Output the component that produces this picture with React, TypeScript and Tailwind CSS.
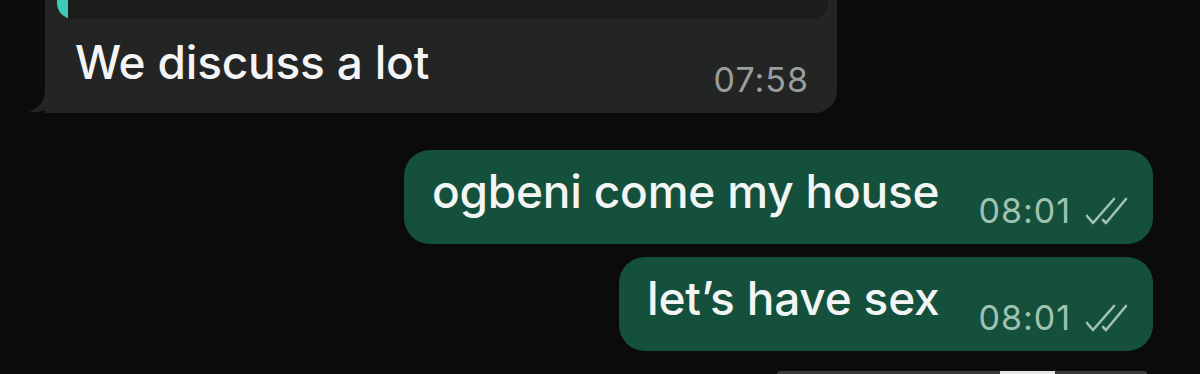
// Chat thread snippet
const font = { fontFamily: 'Inter, "Liberation Sans", Arial, sans-serif' };

function DoubleCheck() {
  return (
    <svg width="44" height="30" viewBox="0 0 44 30" fill="none" className="shrink-0">
      <path d="M3 20 L9 27 L30 3" stroke="#9fc2b2" strokeWidth="2.6" strokeLinecap="round" strokeLinejoin="round" />
      <path d="M19 24 L22 27 L42 3" stroke="#9fc2b2" strokeWidth="2.6" strokeLinecap="round" strokeLinejoin="round" />
    </svg>
  );
}

function Outgoing({ text }: { text: string }) {
  return (
    <div className="flex h-[94px] items-start rounded-[26px] bg-[#14503b] pl-[28px] pr-[25px] pt-[13px]">
      <span className="text-[46px] font-medium leading-[56px] tracking-[-0.2px] text-[#f2f5f3]">{text}</span>
      <div className="ml-[39px] mt-[28px] flex items-center gap-[13px]">
        <span className="text-[34px] leading-[40px] tracking-[1px] text-[#9fc2b2]">08:01</span>
        <DoubleCheck />
      </div>
    </div>
  );
}

export default function App() {
  return (
    <div className="flex h-[374px] w-[1200px] flex-col overflow-hidden bg-[#0b0b0b]" style={font}>
      {/* incoming */}
      <div className="relative ml-[45px] mt-[-61px] w-[792px] rounded-[22px] rounded-bl-none bg-[#232424] pb-[13px] pt-[10px]">
        <div className="ml-[12px] mr-[9px] flex h-[70px] overflow-hidden rounded-[16px] bg-[#1c1c1c]">
          <div className="w-[11px] bg-[#3ccab7]" />
        </div>
        <div className="mt-[15px] flex items-start justify-between pl-[30px] pr-[28px]">
          <span className="text-[46px] font-medium leading-[56px] tracking-[-0.2px] text-[#f4f4f4]">We discuss a lot</span>
          <span className="mt-[26px] text-[34px] leading-[40px] tracking-[1px] text-[#9b9c9c]">07:58</span>
        </div>
        <svg className="absolute bottom-0 left-[-16px]" width="40" height="45" viewBox="0 0 40 45">
          <path d="M16 0 L16 22 C16 33 10 40 0 44 C5 45 13 44 24 40 C28 44 33 45 40 45 L40 0 Z" fill="#232424" />
        </svg>
      </div>

      {/* outgoing */}
      <div className="mr-[47px] mt-[37px] flex flex-col items-end gap-[13px]">
        <Outgoing text="ogbeni come my house" />
        <Outgoing text="let’s have sex" />
      </div>

      {/* next message peeking in */}
      <div className="ml-[777px] mt-[20px] flex h-[10px] w-[370px] overflow-hidden rounded-t-[6px] bg-[#3a3a3a]">
        <div className="ml-[223px] w-[55px] bg-[#e6e6e6]" />
      </div>
    </div>
  );
}
